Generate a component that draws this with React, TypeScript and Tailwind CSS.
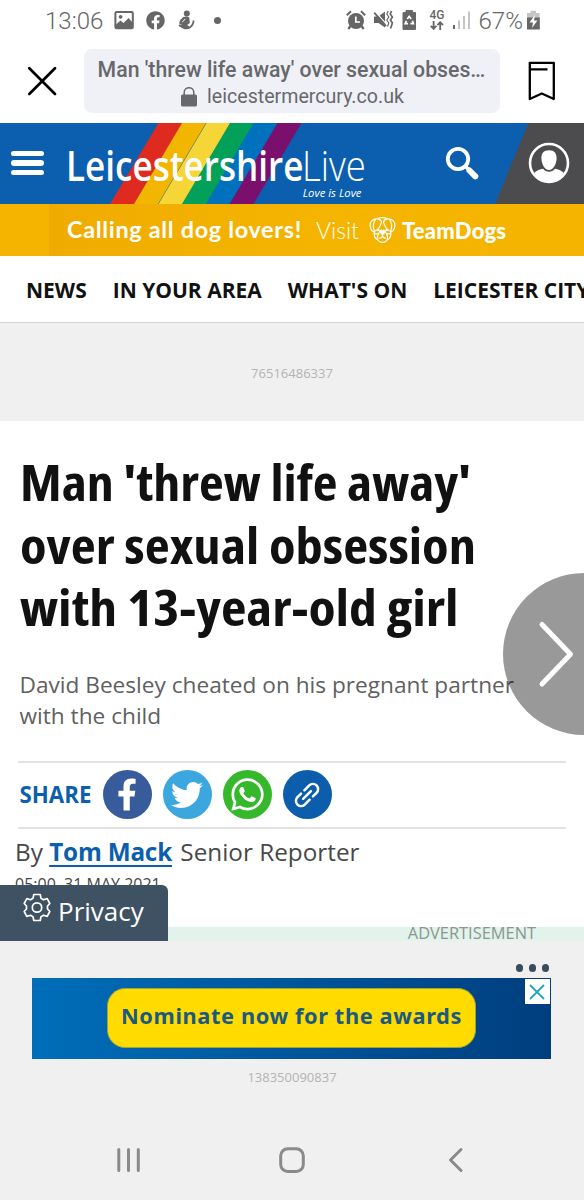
import { FaFacebook, FaFacebookF, FaTwitter, FaWhatsapp } from "react-icons/fa";

const navItems = ["NEWS", "IN YOUR AREA", "WHAT'S ON", "LEICESTER CITY"];

/* Rainbow stripes of the masthead, left edge to right edge */
const stripes = [
  { color: "#de2a1f", top: 158.5, bottom: 110 },
  { color: "#f3b600", top: 182, bottom: 134 },
  { color: "#f6d637", top: 206.5, bottom: 158.5 },
  { color: "#03a05a", top: 230, bottom: 182 },
  { color: "#0071bd", top: 253.5, bottom: 206 },
  { color: "#7b0f6e", top: 277.5, bottom: 229.5 },
];

const StatusBar = () => (
  <div className="flex h-10 items-center pl-[45px] font-['Roboto',sans-serif] text-[24px] leading-none text-[#666]">
    <span className="w-[60px] pt-0.5 font-light">13:06</span>
    {/* Gallery */}
    <svg className="ml-[9px]" width="21" height="20" viewBox="0 0 21 20" fill="none">
      <rect x="1.4" y="1.9" width="17.4" height="16.4" rx="1.2" stroke="#666" strokeWidth="2" />
      <circle cx="6.6" cy="6.8" r="1.9" fill="#666" />
      <path d="M2 14.5 L6.5 10.5 L9.5 13 L14.5 8 L18.5 12.5 V18 H2 Z" fill="#666" />
    </svg>
    <FaFacebook className="ml-[10.5px] h-[19px] w-[19px]" />
    {/* Seated figure */}
    <svg className="ml-[13px]" width="17" height="20" viewBox="0 0 17 20" fill="none" stroke="#666">
      <circle cx="8.8" cy="3.6" r="3" fill="#666" stroke="none" />
      <path d="M5 7.2 Q9 5.5 11.3 7.5 L11.8 13 Q9 16 5.2 15 L1 13.5 Q2 9 5 7.2 Z" fill="#666" stroke="none" />
      <path d="M4.2 12.2 L7.2 9" stroke="#fff" strokeWidth="1" />
      <path d="M1 15 Q8 20.5 12 17.2 Q15.6 14.8 15.5 10.5" strokeWidth="1.8" />
      <path d="M2 15.2 Q7 13.5 11 16.5 L8 18.6 Z" fill="#666" strokeWidth="1" />
    </svg>
    <span className="ml-[19px] h-[7px] w-[7px] rounded-full bg-[#666]" />

    {/* Alarm */}
    <svg className="ml-[125px]" width="20" height="20" viewBox="0 0 20 20" fill="none" stroke="#666">
      <circle cx="10" cy="11" r="8" fill="#666" stroke="none" />
      <path d="M.8 5.2 L5 1.2 M19.2 5.2 L15 1.2" strokeWidth="2" />
      <path d="M4.5 16 L2.3 19 M15.5 16 L17.7 19" strokeWidth="2.2" />
      <path d="M9.8 6.5 V12 H14" stroke="#fff" strokeWidth="1.7" />
    </svg>
    {/* Vibrate, muted */}
    <svg className="ml-[7px]" width="21" height="20" viewBox="0 0 21 20" fill="none" stroke="#666">
      <path d="M1 6.5 H5.5 L12 1.5 V17.5 L5.5 13 H1 Z" fill="#666" stroke="none" />
      <path d="M2.2 1.6 L14.5 15.4" stroke="#fff" strokeWidth="1.2" />
      <path d="M1.2 2.6 L13 16.2" strokeWidth="1.8" />
      <path d="M15.2 1 L13.8 4 L15.8 7 L13.8 10 L15.8 13 L14.5 16.5" strokeWidth="1.2" />
      <path d="M18.6 1 L17.2 4 L19.4 7 L17.4 10 L19.4 13 L17.6 18.5" strokeWidth="1.7" />
    </svg>
    {/* Battery saver */}
    <svg className="ml-[8px]" width="15" height="20" viewBox="0 0 15 20" fill="none">
      <path d="M4 2.6 V.6 H10.5 V2.6 H13.5 V19.4 H1 V2.6 Z" fill="#666" stroke="#666" strokeLinejoin="round" />
      <path d="M5.2 9 L7.2 6.4 L9.2 9 M10.4 10.8 L11.4 13.6 H8.5 M6 13.6 H3.2 L4.4 10.8" stroke="#fff" strokeWidth="1.7" />
    </svg>
    <div className="ml-[11px] flex w-[19px] flex-col items-center">
      <span className="text-[12px] font-medium leading-[11px]">4G</span>
      <svg width="14" height="9" viewBox="0 0 14 9" fill="none" stroke="#666" strokeWidth="1.8">
        <path d="M3.6 0 V7.5 M.8 4.8 L3.6 7.8 L6.4 4.8 M10.2 9 V1.5 M7.4 4.2 L10.2 1.2 L13 4.2" />
      </svg>
    </div>
    {/* Signal strength */}
    <svg className="ml-[5px]" width="19" height="20" viewBox="0 0 19 20">
      <rect x="1" y="15" width="2" height="4" fill="#666" />
      <rect x="6" y="10.5" width="2" height="8.5" fill="#c4c4c4" />
      <rect x="11" y="6" width="2" height="13" fill="#c4c4c4" />
      <rect x="16" y="1.5" width="2" height="17.5" fill="#c4c4c4" />
    </svg>
    <span className="ml-[8px] w-[47px] pt-0.5 font-light">67%</span>
    {/* Battery */}
    <svg width="15" height="20" viewBox="0 0 15 20">
      <path d="M4.5 .8 H10 V3 H13.6 V8 H1 V3 H4.5 Z" fill="#c4c4c4" />
      <rect x="1" y="7.5" width="12.8" height="12" fill="#666" />
      <path d="M9 5 L3.5 12.5 H7 L6 18 L11.5 10.5 H8 Z" fill="#fff" />
    </svg>
  </div>
);

const BrowserBar = () => (
  <div className="flex h-[83px] items-start pl-[27px] pt-[9px]">
    <svg className="mt-[17px]" width="30" height="30" viewBox="0 0 30 30" fill="none" stroke="#000" strokeWidth="2.7" strokeLinecap="round">
      <path d="M2.3 2.3 L28 28 M28 2.3 L2.3 28" />
    </svg>
    <div className="ml-[27px] flex h-16 w-[416px] flex-col items-center rounded-lg bg-[#f0f1f6] pt-[7px] font-['Roboto',sans-serif] text-[#66686c]">
      <p className="whitespace-nowrap pr-px text-[21.25px] font-medium leading-[27px]">Man 'threw life away' over sexual obses…</p>
      <div className="flex items-center">
        <svg width="18" height="20" viewBox="0 0 18 20" fill="none">
          <rect x="1" y="7.6" width="16" height="11.8" rx="1.5" fill="#66686c" />
          <path d="M4.2 8 V5.5 A4.8 4.8 0 0 1 13.8 5.5 V8" stroke="#66686c" strokeWidth="1.5" />
        </svg>
        <span className="ml-[9px] text-[19.6px] leading-[27px]">leicestermercury.co.uk</span>
      </div>
    </div>
    <svg className="ml-[28px] mt-[12px]" width="28" height="40" viewBox="0 0 28 40" fill="none" stroke="#000" strokeWidth="2.3" strokeLinejoin="round">
      <path d="M1.8 1.8 H25.8 V38 L13.8 32.5 L1.8 38 Z M1.5 8.3 H19.5" />
    </svg>
  </div>
);

const Masthead = () => (
  <header className="relative h-[81px] bg-[#0c5fae]">
    <svg className="absolute inset-0" width="584" height="81" viewBox="0 0 584 81">
      {stripes.map(({ color, top, bottom }) => (
        <polygon key={color} fill={color} points={`${top},0 ${top + 24},0 ${bottom + 24},81 ${bottom},81`} />
      ))}
      <polygon fill="#4c4c4e" points="528.5,0 584,0 584,81 495,81" />
    </svg>
    <div className="relative flex h-full items-start pl-[11px] text-white">
      <div className="mt-[27.5px] flex w-[33px] flex-col gap-[4.5px]">
        <span className="h-[5.3px] rounded-full bg-white" />
        <span className="h-[5.3px] rounded-full bg-white" />
        <span className="h-[5.3px] rounded-full bg-white" />
      </div>
      <div className="ml-[21.5px] w-[300px] font-['Open_Sans',sans-serif]">
        <h2 className="mt-[14px] flex whitespace-nowrap text-[41.5px] leading-[57px]">
          <span className="w-[236px] origin-left scale-x-[0.845] font-semibold">Leicestershire</span>
          <span className="origin-left scale-x-[0.88] font-light">Live</span>
        </h2>
        <p className="-mt-[9px] pr-[4px] text-right text-[11.3px] font-medium italic leading-4">Love is Love</p>
      </div>
      <svg className="ml-[79.5px] mt-[23px]" width="35" height="36" viewBox="0 0 35 36" fill="none" stroke="#fff">
        <circle cx="13" cy="13" r="10.2" strokeWidth="3.8" />
        <path d="M20 20 L24 24" strokeWidth="3.6" />
        <path d="M24.5 24.5 L30.3 30.3" strokeWidth="6" strokeLinecap="round" />
      </svg>
      <svg className="ml-[48px] mt-[19px]" width="42" height="42" viewBox="0 0 42 42">
        <circle cx="21" cy="21" r="19" fill="none" stroke="#fff" strokeWidth="2.6" />
        <path d="M21 8.2 C26.5 8.2 28.8 11.5 28.6 16.5 C28.4 22 25.5 28 21 28 C16.5 28 13.6 22 13.4 16.5 C13.2 11.5 15.5 8.2 21 8.2 Z" fill="#fff" />
        <path d="M6 31 C9 28.5 12 27.2 15 26.8 C18 30.8 24 30.8 27 26.8 C30 27.2 33 28.5 36 31 C33 36 27 40 21 40 C15 40 9 36 6 31 Z" fill="#fff" />
      </svg>
    </div>
  </header>
);

const DogIcon = () => (
  <svg width="27" height="28" viewBox="0 0 28 28" fill="none" stroke="#fff" strokeWidth="1.25">
    <path d="M9 2.5 C11 .8 17 .8 19 2.5" />
    <path d="M9 2.5 C4 2 .8 5.5 1.2 9.5 C1.6 14 3.5 16.2 5.6 15.5 C9 14 12 9.5 13 5.5 C12 3.5 10.5 2.5 9 2.5 Z" />
    <path d="M19 2.5 C24 2 27.2 5.5 26.8 9.5 C26.4 14 24.5 16.2 22.4 15.5 C19 14 16 9.5 15 5.5 C16 3.5 17.5 2.5 19 2.5 Z" />
    <path d="M7 2.8 C4 6.5 4.2 11.5 5.6 15.5 M21 2.8 C24 6.5 23.8 11.5 22.4 15.5" />
    <path d="M5.6 15.5 C4.8 19.5 6.2 23 9 24 C10.5 27.8 17.5 27.8 19 24 C21.8 23 23.2 19.5 22.4 15.5" />
    <path d="M9 24 C8 19.5 10 17 13 13.5 M19 24 C20 19.5 18 17 15 13.5 M5.6 18 C8 17.5 9.5 18.5 10 19.5 M22.4 18 C20 17.5 18.5 18.5 18 19.5" />
    <circle cx="9.5" cy="14" r=".8" fill="#fff" />
    <circle cx="18.5" cy="14" r=".8" fill="#fff" />
    <path d="M11.2 15 H16.8 L15.2 18 H12.8 Z" fill="#fff" />
    <path d="M14 17 V20.5 M10.5 22.5 Q12.5 22.5 14 20.5 Q15.5 22.5 17.5 22.5" />
  </svg>
);

const DogBanner = () => (
  <div className="flex h-[52px] bg-[#f4b400]">
    <div className="ml-[49px] flex flex-1 items-center bg-linear-to-r from-[#f0ab00] to-[#f4b400] to-50% pl-[18px] font-['Lato',sans-serif] text-white">
      <span className="w-[249px] whitespace-nowrap text-[23.4px] font-bold tracking-[0.7px]">Calling all dog lovers!</span>
      <span className="w-[53px] text-[23px] font-light">Visit</span>
      <DogIcon />
      <span className="ml-[6px] text-[22px] font-black tracking-[0.2px]">TeamDogs</span>
    </div>
  </div>
);

const ShareRow = () => (
  <div className="mx-[18px] flex h-[68px] items-center border-y-2 border-[#e2e2e2] pl-[1.5px]">
    <span className="w-[83px] font-['Open_Sans',sans-serif] text-[22.3px] font-bold text-[#0c5fae]">SHARE</span>
    <div className="flex gap-[11px] text-white">
      <span className="flex h-[49px] w-[49px] items-end justify-center rounded-full bg-[#385b9b] pb-[8px]">
        <FaFacebookF className="h-[33px] w-[20px]" />
      </span>
      <span className="flex h-[49px] w-[49px] items-center justify-center rounded-full bg-[#3ca7df]">
        <FaTwitter className="h-[32px] w-[32px]" />
      </span>
      <span className="flex h-[49px] w-[49px] items-center justify-center rounded-full bg-[#35b82c]">
        <FaWhatsapp className="h-[37px] w-[37px]" />
      </span>
      <span className="flex h-[49px] w-[49px] items-center justify-center rounded-full bg-[#0c5dac]">
        <svg width="32" height="32" viewBox="-16 -16 32 32" fill="none" stroke="#fff" strokeWidth="2.5" strokeLinecap="round">
          <g transform="rotate(-45)">
            <path d="M1.5 -5.2 H8.3 A5.2 5.2 0 0 1 8.3 5.2 H3.2 M-1.5 5.2 H-8.3 A5.2 5.2 0 0 1 -8.3 -5.2 H-3.2 M-5.5 0 H5.5" />
          </g>
        </svg>
      </span>
    </div>
  </div>
);

const PrivacyTab = () => (
  <div className="absolute left-0 top-[885px] flex h-[56px] w-[168px] rounded-tr-md bg-[#3e5263] pl-[23px] text-white">
    <svg className="mt-[8px]" width="28" height="29" viewBox="0 0 28 29" fill="none" stroke="#fff" strokeWidth="1.7" strokeLinejoin="round">
      <circle cx="14" cy="14.5" r="4.7" />
      <path d="M10.8 1.5 H17.2 L18 5.3 L20.5 6.8 L24.2 5.6 L26.8 10.5 L24.5 13 V16 L26.8 18.5 L24.2 23.4 L20.5 22.2 L18 23.7 L17.2 27.5 H10.8 L10 23.7 L7.5 22.2 L3.8 23.4 L1.2 18.5 L3.5 16 V13 L1.2 10.5 L3.8 5.6 L7.5 6.8 L10 5.3 Z" />
    </svg>
    <span className="ml-[7px] mt-[8px] font-['Open_Sans',sans-serif] text-[26px] leading-[36px]">Privacy</span>
  </div>
);

const AdSection = () => (
  <section className="flex-1 bg-[#f0f0f0] font-['Open_Sans',sans-serif]">
    <div className="flex h-[14px] items-center justify-end bg-[#e1f3eb] pr-[48px] text-[16.4px] leading-none text-[#8b9690]">
      <span className="-mt-px">ADVERTISEMENT</span>
    </div>
    <div className="mr-[35px] mt-[23px] flex justify-end gap-[5.5px]">
      <span className="h-[7.5px] w-[7.5px] rounded-full bg-[#3a4d5c]" />
      <span className="h-[7.5px] w-[7.5px] rounded-full bg-[#3a4d5c]" />
      <span className="h-[7.5px] w-[7.5px] rounded-full bg-[#3a4d5c]" />
    </div>
    <div className="relative ml-[32px] mt-[6px] flex h-[81px] w-[519px] items-center bg-linear-to-r from-[#006eb9] to-[#003e7e] pl-[75px]">
      <button className="h-[60px] w-[369px] rounded-[18px] border border-[#9aa63a] bg-[#ffdb00] pb-[3px] font-['Noto_Sans',sans-serif] text-[21.8px] font-bold tracking-[0.6px] text-[#1b5a80]">
        Nominate now for the awards
      </button>
      <span className="absolute right-[1.5px] top-[1.5px] flex h-[25px] w-[25px] items-center justify-center bg-white">
        <svg width="16" height="16" viewBox="0 0 16 16" fill="none" stroke="#1fa5c4" strokeWidth="1.8">
          <path d="M1 1 L15 15 M15 1 L1 15" />
        </svg>
      </span>
    </div>
    <p className="mt-[9px] text-center text-[13px] leading-[18px] text-[#b3b3b3]">138350090837</p>
  </section>
);

const SystemNav = () => (
  <nav className="flex h-20 items-center bg-[#f0f0f0] pl-[116px]">
    <svg width="348" height="26" viewBox="0 0 348 26" fill="none" stroke="#8a8a8a" strokeWidth="3" strokeLinecap="round">
      <path d="M2.8 2.5 V23.5 M12.5 2.5 V23.5 M22.3 2.5 V23.5" />
      <rect x="164.7" y="1.8" width="22.6" height="22.6" rx="7" />
      <path d="M345 2.5 L334.5 13 L345 23.5" strokeLinejoin="round" />
    </svg>
  </nav>
);

export default function App() {
  return (
    <div className="relative flex h-[1200px] w-[584px] flex-col overflow-hidden bg-white">
      <StatusBar />
      <BrowserBar />
      <Masthead />
      <DogBanner />

      <nav className="flex h-[67px] items-center gap-[26px] whitespace-nowrap border-b border-[#d5d5d5] pl-[26px] pt-[3px] font-['Open_Sans',sans-serif] text-[21px] font-bold text-[#111]">
        {navItems.map((item) => (
          <span key={item}>{item}</span>
        ))}
      </nav>

      <div className="flex h-[98px] items-center justify-center bg-[#f0f0f0] pt-[3px] font-['Open_Sans',sans-serif] text-[13px] text-[#b3b3b3]">
        76516486337
      </div>

      <article className="h-[506px] font-['Open_Sans',sans-serif]">
        <h1 className="ml-[20px] mt-[30px] whitespace-nowrap text-[50px] font-bold leading-[62.5px] text-[#111] [font-stretch:75%]">
          <span className="block w-[416px] origin-left scale-x-[1.08]">Man 'threw life away'</span>
          <span className="block w-[418px] origin-left scale-x-[1.09]">over sexual obsession</span>
          <span className="block w-[394px] origin-left scale-x-[1.112]">with 13-year-old girl</span>
        </h1>
        <p className="ml-[19.5px] mt-[30px] h-[92px] whitespace-nowrap text-[22.65px] leading-[31.5px] text-[#606060]">
          David Beesley cheated on his pregnant partner
          <br />
          with the child
        </p>
        <ShareRow />
        <p className="ml-[15px] mt-[6px] whitespace-nowrap text-[24.3px] leading-[34px] text-[#484848]">
          By <a className="font-bold tracking-[-0.2px] text-[#0c5fae] underline decoration-2 underline-offset-[4px]">Tom Mack</a>{" "}
          <span className="ml-[2px]">Senior Reporter</span>
        </p>
        <p className="ml-[15px] mt-[4px] text-[16px] leading-[22px] text-[#484848]">05:00, 31 MAY 2021</p>
      </article>

      <AdSection />
      <SystemNav />
      <PrivacyTab />

      {/* Next article control */}
      <div className="absolute -right-[81px] top-[573px] h-[162px] w-[162px] rounded-full bg-black/40">
        <svg className="absolute left-[34px] top-[47px]" width="40" height="70" viewBox="0 0 40 70" fill="none" stroke="#fff" strokeWidth="5" strokeLinecap="round" strokeLinejoin="round">
          <path d="M5 4.5 L33.5 34.3 L5 64" />
        </svg>
      </div>
    </div>
  );
}
